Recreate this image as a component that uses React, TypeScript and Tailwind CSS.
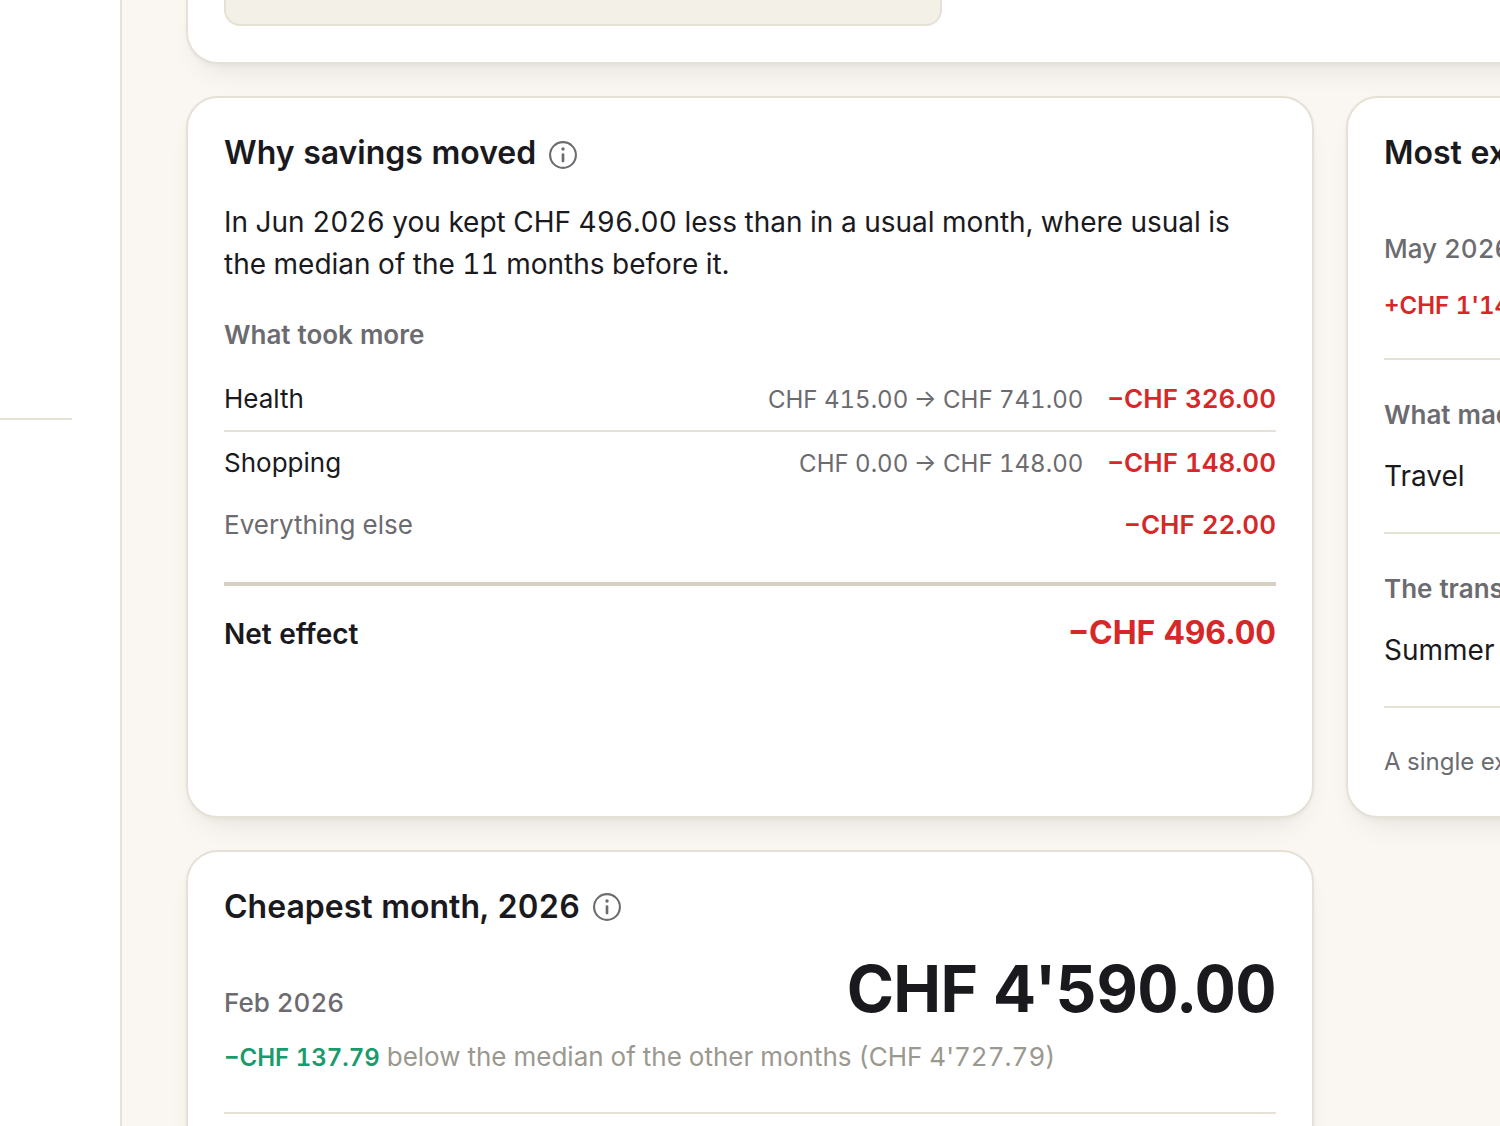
import type { ReactNode } from 'react';
import clsx from 'clsx';

type Driver = { name: string; from: string; to: string; delta: string };

const drivers: Driver[] = [
  { name: 'Health', from: 'CHF 415.00', to: 'CHF 741.00', delta: '−CHF 326.00' },
  { name: 'Shopping', from: 'CHF 0.00', to: 'CHF 148.00', delta: '−CHF 148.00' },
];

function InfoIcon({ className }: { className?: string }) {
  return (
    <svg viewBox="0 0 28 28" className={clsx('size-7 shrink-0 text-[#6b6b70]', className)} fill="none">
      <circle cx="14" cy="14" r="12.9" stroke="currentColor" strokeWidth="2.1" />
      <circle cx="14" cy="8" r="1.7" fill="currentColor" />
      <path d="M14 13.5v6.6" stroke="currentColor" strokeWidth="2.7" strokeLinecap="round" />
    </svg>
  );
}

function Card({ className, children }: { className?: string; children?: ReactNode }) {
  return (
    <section
      className={clsx(
        'rounded-[32px] border-2 border-[#e6e1d6] bg-white px-9 shadow-[0_2px_4px_rgba(28,28,30,0.04),0_16px_32px_-16px_rgba(28,28,30,0.12)]',
        className,
      )}
    >
      {children}
    </section>
  );
}

function CardTitle({ children, iconClass }: { children: ReactNode; iconClass?: string }) {
  return (
    <div className="flex h-[38px] items-center gap-[13px]">
      <h2 className="text-[32px] leading-[38px] font-semibold whitespace-nowrap">{children}</h2>
      <InfoIcon className={iconClass} />
    </div>
  );
}

function SavingsCard() {
  return (
    <Card className="h-[722px] w-[1128px] shrink-0 pt-9">
      <CardTitle iconClass="mt-1">Why savings moved</CardTitle>
      <p className="mt-[29px] text-[28px] leading-[42px]">
        In Jun 2026 you kept CHF 496.00 less than in a usual month, where usual is
        <br />
        the median of the 11 months before it.
      </p>
      <h3 className="mt-[30px] text-[26px] leading-[39px] font-semibold text-[#6b6b70]">What took more</h3>

      <ul className="mt-[14px] text-[26px] leading-[61px]">
        {drivers.map((driver, i) => (
          <li
            key={driver.name}
            className={clsx('flex items-baseline', i === 0 ? 'h-16 border-b-2 border-[#e6e1d6]' : 'h-[62px]')}
          >
            <span className="flex-1">{driver.name}</span>
            <span className="mr-6 text-[24px] text-[#6b6b70]">
              <span className="-mr-px">{driver.from}</span> → {driver.to}
            </span>
            <span className="font-semibold text-[#d62828]">{driver.delta}</span>
          </li>
        ))}
        <li className="flex h-[62px] items-baseline justify-between">
          <span className="text-[#6b6b70]">Everything else</span>
          <span className="font-semibold text-[#d62828]">−CHF 22.00</span>
        </li>
      </ul>

      <div className="mt-[26px] flex items-baseline justify-between border-t-4 border-[#d8cfc4] pt-[22px]">
        <span className="text-[28px] font-semibold">Net effect</span>
        <span className="text-[32px] leading-[50px] font-bold text-[#d62828]">−CHF 496.00</span>
      </div>
    </Card>
  );
}

function ExpensiveCard() {
  return (
    <Card className="h-[722px] w-[1128px] shrink-0 pt-9">
      <CardTitle>Most expensive month, 2026</CardTitle>
      <div className="mt-[57px] text-[26px] leading-10 font-medium text-[#6b6b70]">May 2026</div>
      <div className="mt-[19px] text-[24px] leading-9 font-semibold text-[#d62828]">+CHF 1'142.21</div>
      <div className="mt-[34px] border-t-2 border-[#e6e1d6] pt-[35px]">
        <h3 className="text-[26px] leading-[39px] font-semibold text-[#6b6b70]">What made it expensive</h3>
        <p className="mt-[21px] text-[28px] leading-[42px]">Travel</p>
      </div>
      <div className="mt-[35px] border-t-2 border-[#e6e1d6] pt-[35px]">
        <h3 className="text-[26px] leading-[39px] font-semibold text-[#6b6b70]">The transaction behind it</h3>
        <p className="mt-[21px] text-[28px] leading-[42px]">Summer holiday</p>
      </div>
      <p className="mt-[35px] border-t-2 border-[#e6e1d6] pt-9 text-[24px] leading-9 text-[#6b6b70]">
        A single expense
      </p>
    </Card>
  );
}

function CheapestCard() {
  return (
    <Card className="h-[722px] w-[1128px] shrink-0 pt-9">
      <CardTitle>Cheapest month, 2026</CardTitle>
      <div className="mt-[24px] flex h-[78px] items-baseline justify-between">
        <span className="text-[26px] font-medium text-[#6b6b70]">Feb 2026</span>
        <span className="text-[64px] leading-[78px] font-bold tracking-[-0.01em]">CHF 4'590.00</span>
      </div>
      <p className="mt-[9px] h-[39px] text-[26px] leading-[39px] text-[#9a988f]">
        <span className="text-[24px] font-semibold text-[#1a9b6c]">−CHF 137.79</span>{' '}
        below the median of the other months (CHF 4'727.79)
      </p>
      <div className="mt-9 border-t-2 border-[#e6e1d6]" />
    </Card>
  );
}

export default function App() {
  return (
    <div className="flex h-[1126px] w-[1500px] overflow-hidden bg-[#faf7f2] font-['Inter',sans-serif] text-[#1a1a1e] tabular-nums antialiased [font-optical-sizing:none]">
      <aside className="w-[122px] shrink-0 border-r-2 border-[#e6e1d6] bg-white pt-[418px]">
        <div className="w-[72px] border-t-2 border-[#e6e1d6]" />
      </aside>

      <main className="flex h-[1572px] flex-col gap-8 pl-16">
        <Card className="h-16 w-[2288px] shrink-0 rounded-t-none border-t-0">
          <div className="h-[26px] w-[718px] rounded-b-2xl border-2 border-t-0 border-[#e6e1d6] bg-[#f3f0e8]" />
        </Card>
        <div className="flex gap-8">
          <SavingsCard />
          <ExpensiveCard />
        </div>
        <CheapestCard />
      </main>
    </div>
  );
}
